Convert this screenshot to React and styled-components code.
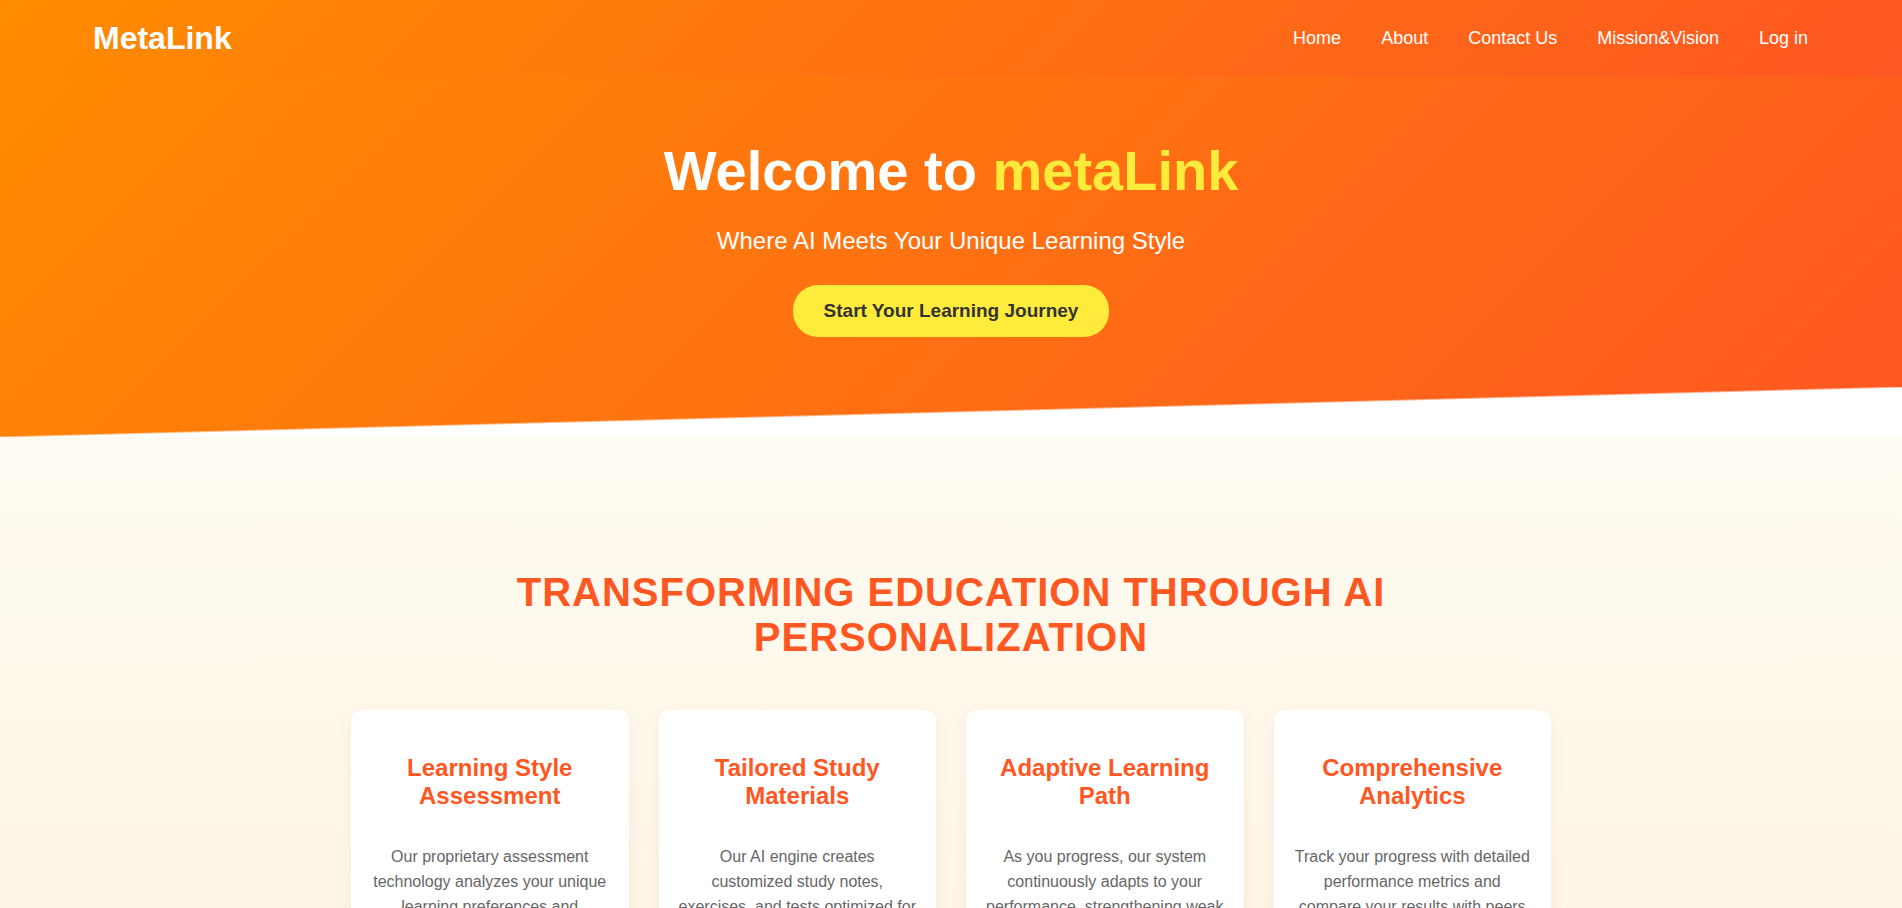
import React from "react";
import styled, { createGlobalStyle } from "styled-components";

const GlobalStyle = createGlobalStyle`
  * { box-sizing: border-box; }
  body {
    margin: 0;
    background: #fff;
    color: #333;
    font-family: Arial, "Liberation Sans", sans-serif;
  }
  h1, h2, h3, p, ul { margin: 0; padding: 0; }
`;

const Header = styled.header`
  position: fixed;
  top: 0;
  left: 0;
  right: 0;
  z-index: 10;
  display: flex;
  justify-content: space-between;
  align-items: center;
  padding: 20px 94px 20px 93px;
  background: linear-gradient(135deg, #ff8c00, #ff5722);
  color: #fff;
`;

const Logo = styled.a`
  font-size: 32px;
  line-height: 37px;
  font-weight: bold;
  color: inherit;
  text-decoration: none;
`;

const NavList = styled.ul`
  display: flex;
  gap: 40px;
  list-style: none;
`;

const NavLink = styled.a`
  display: block;
  padding-bottom: 2px;
  font-size: 18px;
  line-height: 20px;
  color: #fff;
  text-decoration: none;
`;

const Hero = styled.section`
  position: relative;
  padding: 137px 20px 100px;
  background: linear-gradient(135deg, #ff8c00, #ff5722);
  color: #fff;
  text-align: center;

  &::after {
    content: "";
    position: absolute;
    left: 0;
    right: 0;
    bottom: 0;
    height: 50px;
    background: linear-gradient(to bottom right, transparent 49%, #fff 51%);
  }
`;

const HeroTitle = styled.h1`
  font-size: 56px;
  line-height: 68px;
  margin-bottom: 20px;
`;

const Accent = styled.span`
  color: #ffeb3b;
`;

const HeroSubtitle = styled.p`
  font-size: 24px;
  line-height: 32px;
  margin-bottom: 28px;
`;

const StartButton = styled.button`
  display: block;
  margin: 0 auto;
  padding: 15px 31px;
  border: 0;
  border-radius: 25px;
  background: #ffeb3b;
  color: #333;
  font-family: inherit;
  font-size: 19px;
  line-height: 22px;
  font-weight: bold;
  cursor: pointer;
`;

const Features = styled.section`
  padding: 133px 20px;
  background: linear-gradient(to bottom, #fffbf2, #fff3e0);
`;

const Container = styled.div`
  max-width: 1200px;
  margin: 0 auto;
`;

const SectionTitle = styled.h2`
  margin-bottom: 50px;
  font-size: 40px;
  line-height: 45px;
  letter-spacing: 1px;
  text-align: center;
  text-transform: uppercase;
  color: #ff5722;
`;

const CardGrid = styled.div`
  display: grid;
  grid-template-columns: repeat(auto-fit, minmax(250px, 1fr));
  gap: 30px;
`;

const Card = styled.article`
  padding: 44px 20px;
  border-radius: 10px;
  background: #fff;
  box-shadow: 0 4px 15px rgba(0, 0, 0, 0.05);
  text-align: center;
`;

const CardTitle = styled.h3`
  margin-bottom: 34px;
  font-size: 24px;
  line-height: 28px;
  color: #ff5722;
`;

const CardText = styled.p`
  font-size: 16px;
  line-height: 25px;
  color: #666;
`;

const links = ["Home", "About", "Contact Us", "Mission&Vision", "Log in"];

const features = [
  {
    title: "Learning Style Assessment",
    text: "Our proprietary assessment technology analyzes your unique learning preferences and",
  },
  {
    title: "Tailored Study Materials",
    text: "Our AI engine creates customized study notes, exercises, and tests optimized for",
  },
  {
    title: "Adaptive Learning Path",
    text: "As you progress, our system continuously adapts to your performance, strengthening weak",
  },
  {
    title: "Comprehensive Analytics",
    text: "Track your progress with detailed performance metrics and compare your results with peers",
  },
];

export default function App() {
  return (
    <>
      <GlobalStyle />
      <Header>
        <Logo href="#">MetaLink</Logo>
        <nav>
          <NavList>
            {links.map((label) => (
              <li key={label}>
                <NavLink href="#">{label}</NavLink>
              </li>
            ))}
          </NavList>
        </nav>
      </Header>
      <main>
        <Hero>
          <HeroTitle>
            Welcome to <Accent>metaLink</Accent>
          </HeroTitle>
          <HeroSubtitle>Where AI Meets Your Unique Learning Style</HeroSubtitle>
          <StartButton type="button">Start Your Learning Journey</StartButton>
        </Hero>
        <Features>
          <Container>
            <SectionTitle>Transforming Education Through AI Personalization</SectionTitle>
            <CardGrid>
              {features.map(({ title, text }) => (
                <Card key={title}>
                  <CardTitle>{title}</CardTitle>
                  <CardText>{text}</CardText>
                </Card>
              ))}
            </CardGrid>
          </Container>
        </Features>
      </main>
    </>
  );
}
